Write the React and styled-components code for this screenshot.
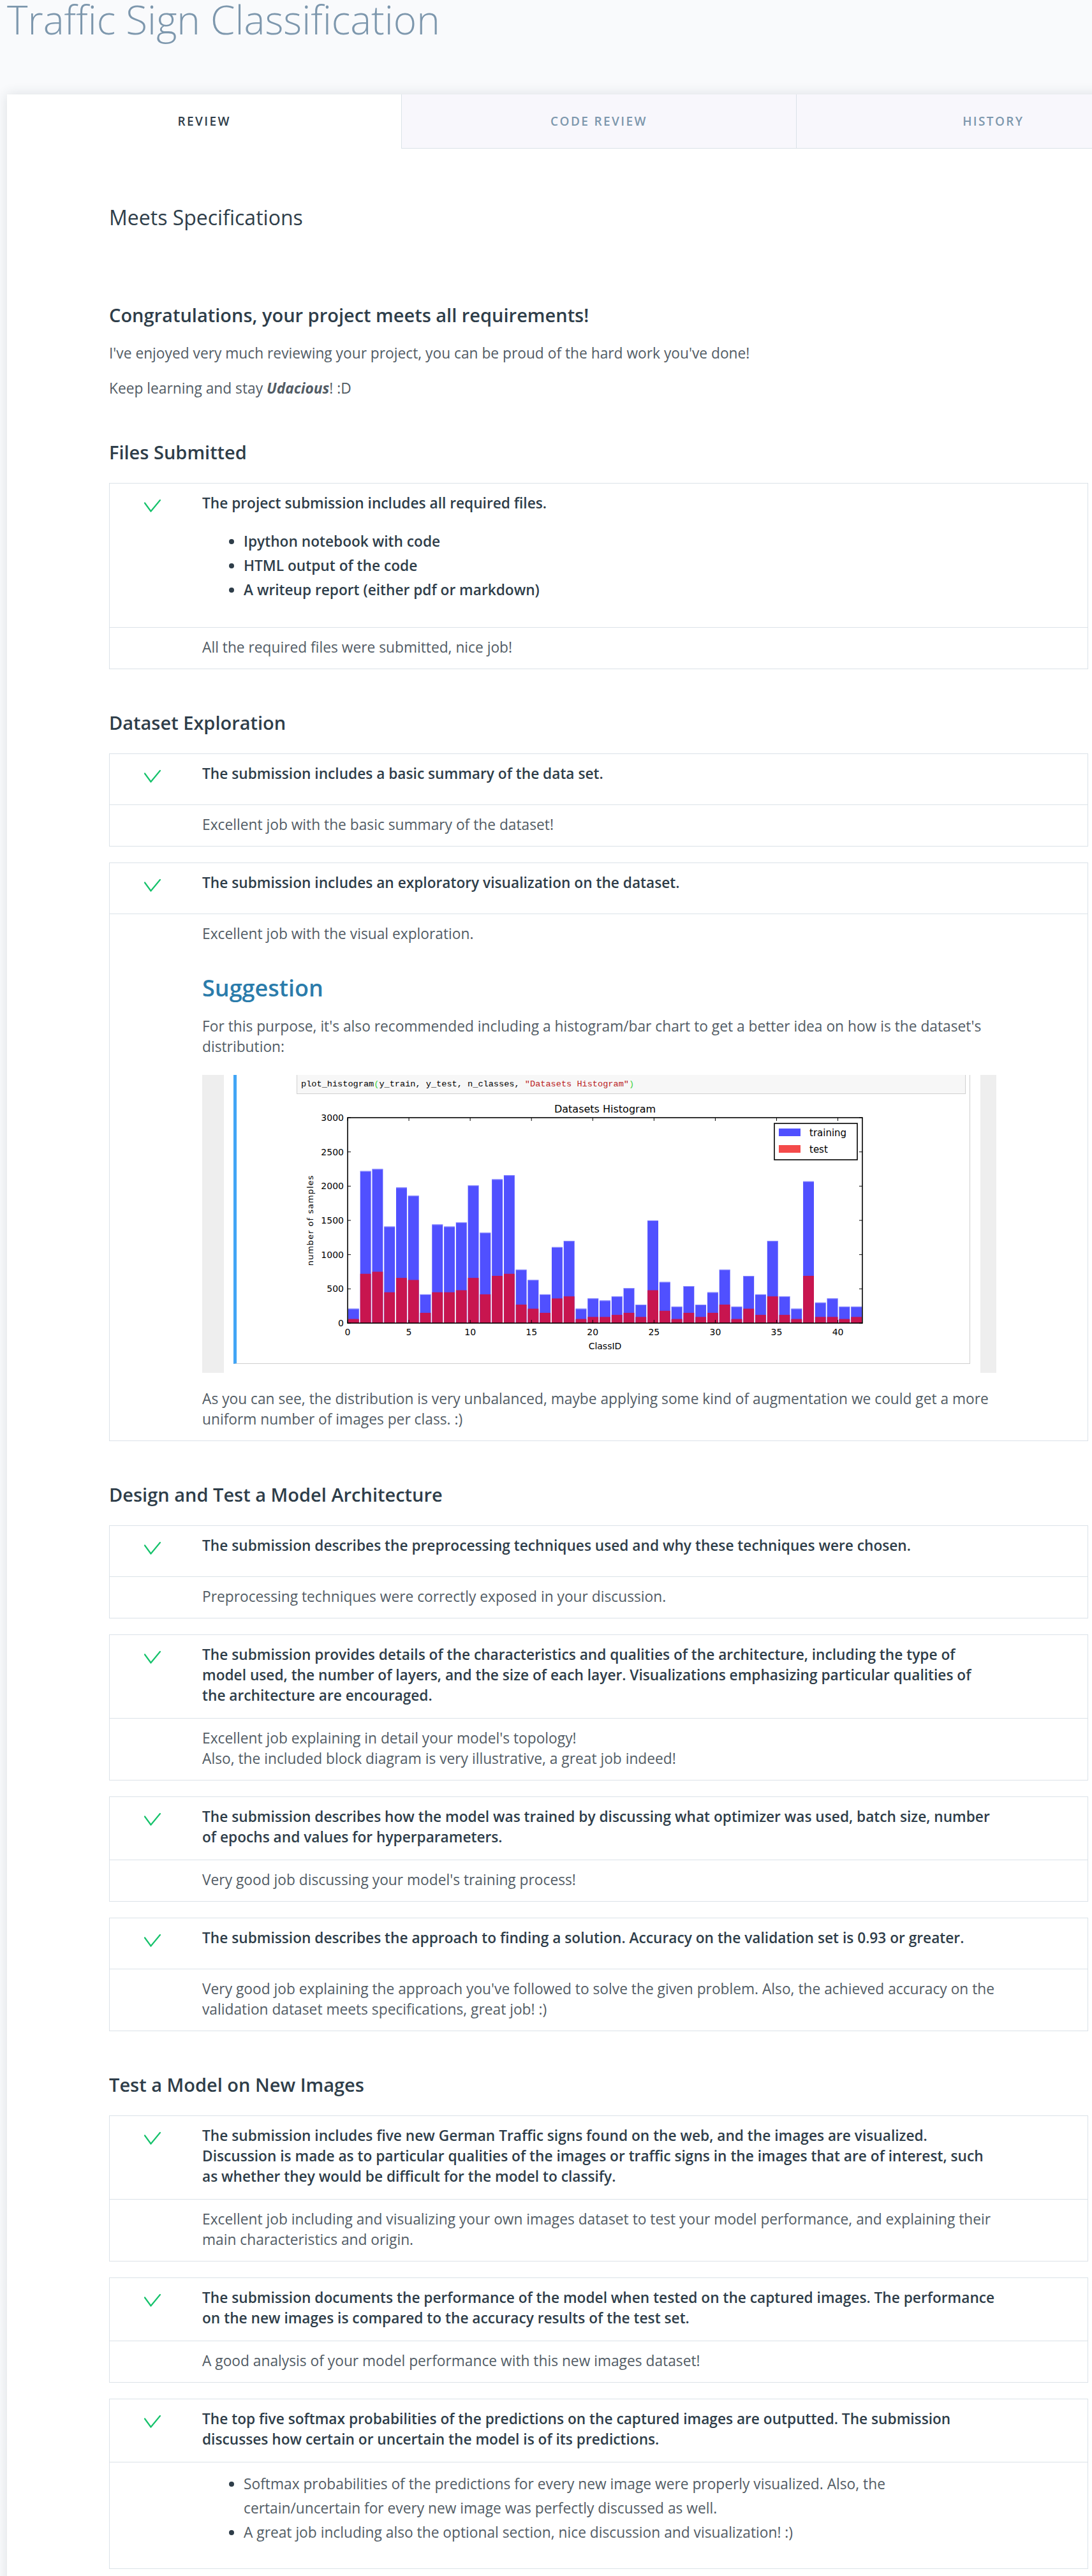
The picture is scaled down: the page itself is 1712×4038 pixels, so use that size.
import React from "react";
import styled, { createGlobalStyle } from "styled-components";

const GlobalStyle = createGlobalStyle`
  html, body { margin: 0; padding: 0; overflow: hidden; background: #f9fafc; }
  body { font-family: "Open Sans", "Liberation Sans", sans-serif; color: #2e3d49; }
  *, *::before, *::after { box-sizing: border-box; }
`;

const Page = styled.div`
  width: 1712px;
  padding-left: 11px;
`;

const Title = styled.h1`
  margin: 0;
  font-weight: 300;
  font-size: 62px;
  line-height: 60px;
  color: #7d97ad;
`;

const Card = styled.main`
  margin-top: 88px;
  width: 1855px;
  background: #fff;
  box-shadow: 0 0 18px rgba(46, 61, 73, 0.14);
`;

const TabBar = styled.nav`
  display: grid;
  grid-template-columns: repeat(3, 1fr);
  height: 85px;
`;

const Tab = styled.div`
  display: flex;
  align-items: center;
  justify-content: center;
  font-size: 19px;
  font-weight: 600;
  letter-spacing: 2.4px;
  text-transform: uppercase;
  color: ${(p) => (p.$active ? "#2e3d49" : "#7d97ad")};
  background: ${(p) => (p.$active ? "#fff" : "#f8f7fc")};
  border-bottom: 1px solid ${(p) => (p.$active ? "transparent" : "#dbe2e8")};
  border-left: ${(p) => (p.$first ? "none" : "1px solid #dbe2e8")};
`;

const Content = styled.div`
  padding: 90px 0 80px 160px;
`;

const Inner = styled.div`
  width: 1535px;
`;

const Verdict = styled.h2`
  margin: 0;
  font-size: 32px;
  font-weight: 400;
  line-height: 35px;
  color: #2e3d49;
`;

const Summary = styled.section`
  margin-top: 120px;
`;

const SubTitle = styled.h3`
  margin: 0 0 ${(p) => p.$gap || 32}px;
  font-size: 29px;
  font-weight: 600;
  line-height: 32px;
  color: #2e3d49;
`;

const Para = styled.p`
  margin: 0 0 ${(p) => p.$gap || 0}px;
  font-size: 22.75px;
  line-height: 32px;
  color: #525c65;
`;

const Section = styled.section`
  margin-top: 68px;
`;

const BoxStack = styled.div`
  display: flex;
  flex-direction: column;
  gap: 25px;
`;

const Box = styled.div`
  border: 1px solid #dbe2e8;
  background: #fff;
`;

const Row = styled.div`
  display: grid;
  grid-template-columns: 145px 1245px;
  line-height: 32px;
`;

const HeaderRow = styled(Row)`
  min-height: 79px;
  padding: 15px 0 19px;
  font-size: 22.69px;
  font-weight: 600;
  color: #2e3d49;
`;

const CommentRow = styled(Row)`
  border-top: 1px solid #dbe2e8;
  padding: 15px 0 17px;
  font-size: 22.75px;
  color: #525c65;
`;

const IconCell = styled.div`
  padding: 10px 0 0 54px;
`;

const TextCell = styled.div`
  min-width: 0;
`;

const PlainText = styled.p`
  margin: 0;
`;

const BulletList = styled.ul`
  margin: ${(p) => (p.$afterText ? "25px 0 20px" : "0 0 20px")};
  padding-left: 65px;
  line-height: 38px;
  li::marker { color: #2e3d49; }
`;

const Suggestion = styled.h2`
  margin: 49px 0 24px;
  font-size: 36px;
  font-weight: 600;
  line-height: 40px;
  color: #2b7cab;
`;

const Shot = styled.div`
  margin: 28px 0 25px;
  width: 1245px;
  height: 467px;
  background: #eeeeee;
  display: flex;
  padding: 0 25px 0 34px;
`;

const ShotPage = styled.div`
  flex: 1;
  background: #fff;
  padding: 0 16px 14px 15px;
`;

const Cell = styled.div`
  height: 100%;
  border-left: 5px solid #42a5f5;
  border-right: 1px solid #cfcfcf;
  border-bottom: 1px solid #cfcfcf;
  padding: 0 6px 0 94px;
  display: flex;
  flex-direction: column;
`;

const CodeBox = styled.div`
  height: 30px;
  background: #f7f7f7;
  border: 1px solid #cfcfcf;
  border-top: none;
  padding: 0 6px;
  display: flex;
  align-items: center;
  font-family: "Liberation Mono", "Courier New", monospace;
  font-size: 13.6px;
  color: #000;
  white-space: pre;
`;

const Paren = styled.span`
  color: #3cd43c;
`;

const Str = styled.span`
  color: #ba2121;
`;

const ChartSvg = styled.svg`
  display: block;
  font-family: "DejaVu Sans", "Liberation Sans", sans-serif;
`;

const CheckSvg = styled.svg`
  display: block;
`;

const Check = () => (
  <CheckSvg width="26" height="20" viewBox="0 0 26 20">
    <path
      d="M1 5.5 L10.5 18.5 L25 1"
      fill="none"
      stroke="#15c26b"
      strokeWidth="2.2"
      strokeLinecap="round"
      strokeLinejoin="round"
    />
  </CheckSvg>
);

const TRAIN = [210, 2220, 2250, 1410, 1980, 1860, 420, 1440, 1410, 1470, 2010, 1320, 2100, 2160, 780, 630, 420, 1110, 1200, 210, 360, 330, 390, 510, 270, 1500, 600, 240, 540, 270, 450, 780, 240, 689, 420, 1200, 390, 210, 2070, 300, 360, 240, 240];
const TEST = [60, 720, 750, 450, 660, 630, 150, 450, 450, 480, 660, 420, 690, 720, 270, 210, 150, 360, 390, 60, 90, 90, 120, 150, 90, 480, 180, 60, 150, 90, 150, 270, 60, 210, 120, 390, 120, 60, 690, 90, 90, 60, 90];

const Histogram = () => {
  const L = 80, R = 887, T = 37, B = 359;
  const px = (u) => L + (u * (R - L)) / 42;
  const py = (v) => B - (v * (B - T)) / 3000;
  const binW = 42 / 43;
  const yTicks = [0, 500, 1000, 1500, 2000, 2500, 3000];
  const xTicks = [0, 5, 10, 15, 20, 25, 30, 35, 40];
  return (
    <ChartSvg width="1049" height="420" viewBox="0 0 1049 420">
      <text x={(L + R) / 2} y="29" textAnchor="middle" fontSize="16" fill="#000">
        Datasets Histogram
      </text>
      {TRAIN.map((v, i) => {
        const x0 = px(i * binW + binW * 0.05);
        const w = px(binW * 0.9) - L;
        return (
          <g key={i}>
            <rect x={x0} y={py(v)} width={w} height={B - py(v)} fill="#5050ff" />
            <rect x={x0} y={py(v)} width={w} height="1" fill="#8f8fff" />
            <rect x={x0} y={py(TEST[i])} width={w} height={B - py(TEST[i])} fill="#c8154f" />
          </g>
        );
      })}
      <rect x={L} y={T} width={R - L} height={B - T} fill="none" stroke="#000" strokeWidth="1.6" />
      {yTicks.map((v) => (
        <g key={v}>
          <line x1={L} x2={L + 5} y1={py(v)} y2={py(v)} stroke="#000" strokeWidth="1" />
          <line x1={R - 5} x2={R} y1={py(v)} y2={py(v)} stroke="#000" strokeWidth="1" />
          <text x={L - 6} y={py(v) + 5} textAnchor="end" fontSize="14" fill="#000">
            {v}
          </text>
        </g>
      ))}
      {xTicks.map((v) => (
        <g key={v}>
          <line x1={px(v)} x2={px(v)} y1={B} y2={B - 5} stroke="#000" strokeWidth="1" />
          <line x1={px(v)} x2={px(v)} y1={T} y2={T + 5} stroke="#000" strokeWidth="1" />
          <text x={px(v)} y="378" textAnchor="middle" fontSize="14" fill="#000">
            {v}
          </text>
        </g>
      ))}
      <text x={(L + R) / 2} y="400" textAnchor="middle" fontSize="14" fill="#000">
        ClassID
      </text>
      <text
        x="0"
        y="0"
        transform={`translate(26 ${(T + B) / 2}) rotate(-90)`}
        textAnchor="middle"
        fontSize="13"
        letterSpacing="1"
        fill="#000"
      >
        number of samples
      </text>
      <rect x="749" y="46" width="130" height="57" fill="#fff" stroke="#000" strokeWidth="1.6" />
      <rect x="756" y="54" width="34" height="12" fill="#5050ff" />
      <text x="804" y="66" fontSize="15" fill="#000">training</text>
      <rect x="756" y="80" width="34" height="12" fill="#f44a4a" />
      <text x="804" y="92" fontSize="15" fill="#000">test</text>
    </ChartSvg>
  );
};

const Criterion = ({ title, list, children }) => (
  <Box>
    <HeaderRow>
      <IconCell>
        <Check />
      </IconCell>
      <TextCell>
        <PlainText>{title}</PlainText>
        {list && (
          <BulletList $afterText>
            {list.map((t) => (
              <li key={t}>{t}</li>
            ))}
          </BulletList>
        )}
      </TextCell>
    </HeaderRow>
    <CommentRow>
      <div />
      <TextCell>{children}</TextCell>
    </CommentRow>
  </Box>
);

export default function App() {
  return (
    <Page>
      <GlobalStyle />
      <Title>Traffic Sign Classification</Title>
      <Card>
        <TabBar>
          <Tab $active $first>Review</Tab>
          <Tab>Code Review</Tab>
          <Tab>History</Tab>
        </TabBar>
        <Content>
          <Inner>
            <Verdict>Meets Specifications</Verdict>
            <Summary>
              <SubTitle $gap={28}>Congratulations, your project meets all requirements!</SubTitle>
              <Para $gap={23}>
                I've enjoyed very much reviewing your project, you can be proud of the hard work you've done!
              </Para>
              <Para>
                Keep learning and stay{" "}
                <strong>
                  <em>Udacious</em>
                </strong>
                ! :D
              </Para>
            </Summary>

            <Section>
              <SubTitle>Files Submitted</SubTitle>
              <BoxStack>
                <Criterion
                  title="The project submission includes all required files."
                  list={[
                    "Ipython notebook with code",
                    "HTML output of the code",
                    "A writeup report (either pdf or markdown)",
                  ]}
                >
                  <PlainText>All the required files were submitted, nice job!</PlainText>
                </Criterion>
              </BoxStack>
            </Section>

            <Section>
              <SubTitle>Dataset Exploration</SubTitle>
              <BoxStack>
                <Criterion title="The submission includes a basic summary of the data set.">
                  <PlainText>Excellent job with the basic summary of the dataset!</PlainText>
                </Criterion>
                <Criterion title="The submission includes an exploratory visualization on the dataset.">
                  <PlainText>Excellent job with the visual exploration.</PlainText>
                  <Suggestion>Suggestion</Suggestion>
                  <PlainText>
                    For this purpose, it's also recommended including a histogram/bar chart to get a better idea on
                    how is the dataset's distribution:
                  </PlainText>
                  <Shot>
                    <ShotPage>
                      <Cell>
                        <CodeBox>
                          plot_histogram<Paren>(</Paren>y_train, y_test, n_classes, <Str>"Datasets Histogram"</Str>
                          <Paren>)</Paren>
                        </CodeBox>
                        <Histogram />
                      </Cell>
                    </ShotPage>
                  </Shot>
                  <PlainText>
                    As you can see, the distribution is very unbalanced, maybe applying some kind of augmentation we
                    could get a more uniform number of images per class. :)
                  </PlainText>
                </Criterion>
              </BoxStack>
            </Section>

            <Section>
              <SubTitle>Design and Test a Model Architecture</SubTitle>
              <BoxStack>
                <Criterion title="The submission describes the preprocessing techniques used and why these techniques were chosen.">
                  <PlainText>Preprocessing techniques were correctly exposed in your discussion.</PlainText>
                </Criterion>
                <Criterion title="The submission provides details of the characteristics and qualities of the architecture, including the type of model used, the number of layers, and the size of each layer. Visualizations emphasizing particular qualities of the architecture are encouraged.">
                  <PlainText>
                    Excellent job explaining in detail your model's topology!
                    <br />
                    Also, the included block diagram is very illustrative, a great job indeed!
                  </PlainText>
                </Criterion>
                <Criterion title="The submission describes how the model was trained by discussing what optimizer was used, batch size, number of epochs and values for hyperparameters.">
                  <PlainText>Very good job discussing your model's training process!</PlainText>
                </Criterion>
                <Criterion title="The submission describes the approach to finding a solution. Accuracy on the validation set is 0.93 or greater.">
                  <PlainText>
                    Very good job explaining the approach you've followed to solve the given problem. Also, the achieved
                    accuracy on the validation dataset meets specifications, great job! :)
                  </PlainText>
                </Criterion>
              </BoxStack>
            </Section>

            <Section>
              <SubTitle>Test a Model on New Images</SubTitle>
              <BoxStack>
                <Criterion title="The submission includes five new German Traffic signs found on the web, and the images are visualized. Discussion is made as to particular qualities of the images or traffic signs in the images that are of interest, such as whether they would be difficult for the model to classify.">
                  <PlainText>
                    Excellent job including and visualizing your own images dataset to test your model performance, and
                    explaining their main characteristics and origin.
                  </PlainText>
                </Criterion>
                <Criterion title="The submission documents the performance of the model when tested on the captured images. The performance on the new images is compared to the accuracy results of the test set.">
                  <PlainText>A good analysis of your model performance with this new images dataset!</PlainText>
                </Criterion>
                <Criterion title="The top five softmax probabilities of the predictions on the captured images are outputted. The submission discusses how certain or uncertain the model is of its predictions.">
                  <BulletList>
                    <li>
                      Softmax probabilities of the predictions for every new image were properly visualized. Also, the
                      certain/uncertain for every new image was perfectly discussed as well.
                    </li>
                    <li>A great job including also the optional section, nice discussion and visualization! :)</li>
                  </BulletList>
                </Criterion>
              </BoxStack>
            </Section>
          </Inner>
        </Content>
      </Card>
    </Page>
  );
}
